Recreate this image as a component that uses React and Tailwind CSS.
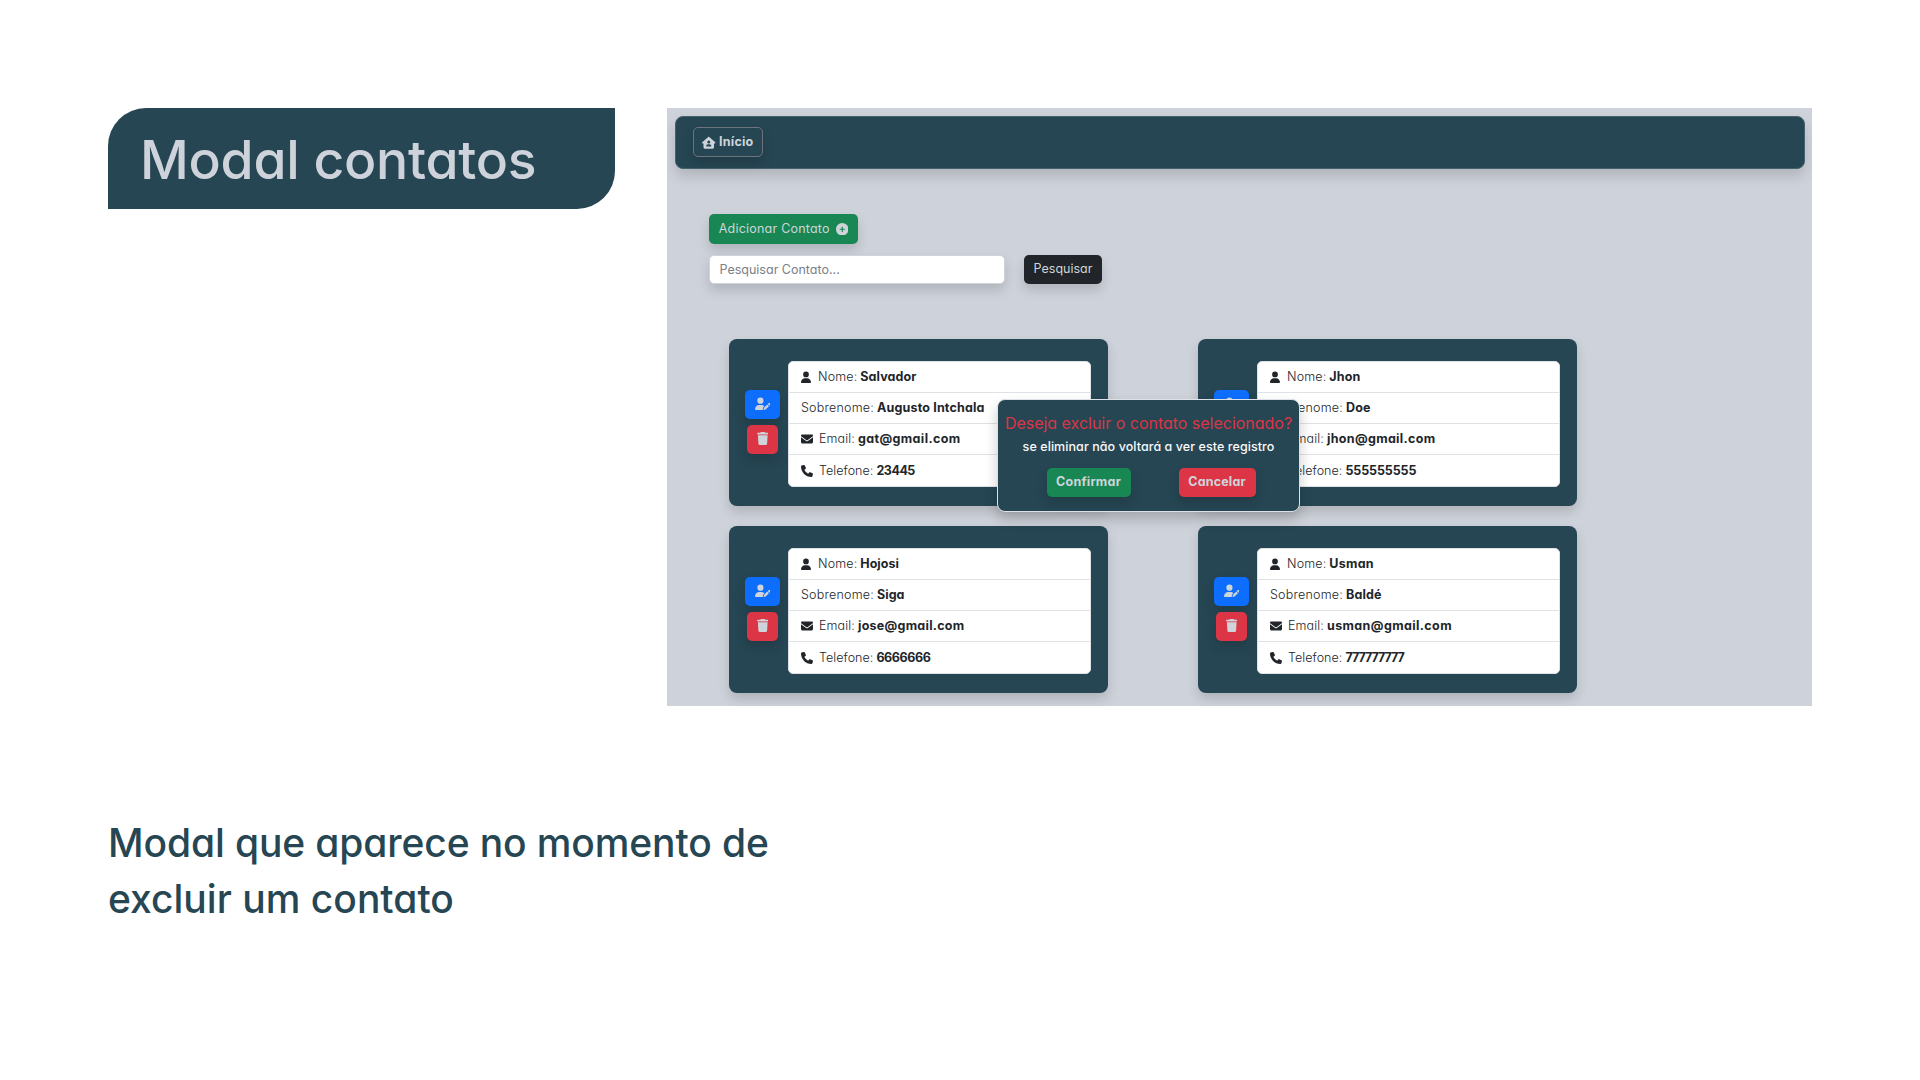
import {
  FaCirclePlus,
  FaEnvelope,
  FaHouseUser,
  FaPhone,
  FaTrash,
  FaUser,
  FaUserPen,
} from "react-icons/fa6";

const contacts = [
  {
    nome: ["Salvador", "tracking-[0.006em]"],
    sobrenome: ["Augusto Intchala", "tracking-[0.013em]"],
    email: ["gat@gmail.com", "tracking-[0.03em]"],
    telefone: ["23445", "tracking-[-0.037em]"],
  },
  {
    nome: ["Jhon", "tracking-[0.009em]"],
    sobrenome: ["Doe", "tracking-[0.01em]"],
    email: ["jhon@gmail.com", "tracking-[0.026em]"],
    telefone: ["555555555", "tracking-[-0.008em]"],
  },
  {
    nome: ["Hojosi", "tracking-normal"],
    sobrenome: ["Siga", "tracking-normal"],
    email: ["jose@gmail.com", "tracking-[0.021em]"],
    telefone: ["6666666", "tracking-[-0.032em]"],
  },
  {
    nome: ["Usman", "tracking-[0.02em]"],
    sobrenome: ["Baldé", "tracking-[0.01em]"],
    email: ["usman@gmail.com", "tracking-[0.031em]"],
    telefone: ["777777777", "tracking-[-0.079em]"],
  },
];

const lift = "shadow-[0_6px_12px_rgba(0,0,0,0.15)]";

function Row({ icon, label, labelClass, value }) {
  return (
    <li className="flex h-[31.1px] items-center pl-[12px] text-[12.5px] leading-none text-[#212529]">
      {icon}
      <span className={`font-light ${labelClass}`}>{label}</span>
      <b className={`ml-[3px] font-bold ${value[1]}`}>{value[0]}</b>
    </li>
  );
}

function ContactCard({ contact }) {
  return (
    <article className={`flex h-[166.5px] w-[379px] rounded-lg bg-[#264653] pl-[16px] pt-[22px] ${lift}`}>
      <div className="flex w-[35px] flex-col items-center gap-[6px] pt-[28.5px] text-[#ced4da]">
        <button className={`flex h-[29.5px] w-[35px] items-center justify-center rounded-[5px] bg-[#0d6efd] ${lift}`}>
          <FaUserPen className="mb-[1px] size-[15.5px]" />
        </button>
        <button className={`flex h-[28.5px] w-[31px] items-center justify-center rounded-[5px] bg-[#dc3545] ${lift}`}>
          <FaTrash className="mb-[1px] h-[13px] w-[11.5px]" />
        </button>
      </div>
      <ul className="ml-[8px] h-[125.5px] w-[303px] divide-y divide-[#dee2e6] overflow-hidden rounded-[5px] border border-[#dee2e6] bg-white">
        <Row
          icon={<FaUser className="mr-[7px] h-[12.5px] w-[10px]" />}
          label="Nome:"
          labelClass="tracking-[0.012em]"
          value={contact.nome}
        />
        <Row label="Sobrenome:" labelClass="tracking-[0.018em]" value={contact.sobrenome} />
        <Row
          icon={<FaEnvelope className="mr-[6px] size-[12px]" />}
          label="Email:"
          labelClass="tracking-[0.01em]"
          value={contact.email}
        />
        <Row
          icon={<FaPhone className="mr-[6px] size-[12px]" />}
          label="Telefone:"
          labelClass="tracking-[0.004em]"
          value={contact.telefone}
        />
      </ul>
    </article>
  );
}

function ConfirmModal() {
  return (
    <div
      role="dialog"
      className="absolute left-[330px] top-[291px] flex h-[113px] w-[303px] flex-col items-center rounded-lg border border-[#dee2e6] bg-[#264653] shadow-[0_7px_13px_rgba(0,0,0,0.2)]"
    >
      <h2 className="mt-[14px] whitespace-nowrap text-[16px] leading-[19px] tracking-[-0.001em] text-[#dc3545]">
        Deseja excluir o contato selecionado?
      </h2>
      <p className="mt-[6px] whitespace-nowrap text-[12.5px] font-medium leading-[15px] tracking-[0.006em] text-[#f8f9fa]">
        se eliminar não voltará a ver este registro
      </p>
      <div className="ml-[5px] mt-[14px] flex gap-[48px] text-[12.5px] font-bold text-[#ced4da]">
        <button className={`h-[29px] w-[84px] rounded-[5px] bg-[#198754] leading-none tracking-[0.02em] ${lift}`}>
          Confirmar
        </button>
        <button className={`h-[29px] w-[77px] rounded-[5px] bg-[#dc3545] leading-none tracking-[0.014em] ${lift}`}>
          Cancelar
        </button>
      </div>
    </div>
  );
}

function ContactsScreen() {
  return (
    <section className="relative h-[598px] w-[1145px] overflow-hidden bg-[#ced2da] pl-[7.5px] pt-[7.5px]">
      <nav className="flex h-[53.5px] w-[1130px] items-center rounded-lg border border-[#45626d] bg-[#264653] pl-[17.5px] shadow-[0_7px_13px_rgba(0,0,0,0.15)]">
        <button className={`flex h-[30px] w-[70px] items-center justify-center gap-[3px] rounded-[5px] border border-[#6c757d] text-[12.5px] font-bold leading-none tracking-[0.019em] text-[#ced4da] ${lift}`}>
          <FaHouseUser className="size-[13.5px]" />
          Início
        </button>
      </nav>

      <div className="ml-[34.5px] mt-[45px] flex flex-col items-start gap-[11px]">
        <button className={`flex h-[30px] w-[149px] items-center justify-center gap-[6px] rounded-[5px] bg-[#198754] text-[12.5px] leading-none tracking-[0.017em] text-[#ced4da] ${lift}`}>
          Adicionar Contato
          <FaCirclePlus className="size-[12.5px]" />
        </button>
        <form className="flex gap-[19px]">
          <input
            placeholder="Pesquisar Contato..."
            className={`h-[29px] w-[296px] rounded-[5px] border border-[#ced4da] bg-white pl-[9.5px] text-[12.5px] placeholder:text-[#7a8087] ${lift}`}
          />
          <button type="button" className={`h-[29px] w-[78px] rounded-[5px] bg-[#212529] text-[12.5px] leading-none text-[#ced4da] ${lift}`}>
            Pesquisar
          </button>
        </form>
      </div>

      <div className="ml-[54.5px] mt-[55px] grid w-[848px] grid-cols-2 gap-x-[90px] gap-y-[20.5px]">
        {contacts.map((contact) => (
          <ContactCard key={contact.nome[0]} contact={contact} />
        ))}
      </div>

      <ConfirmModal />
    </section>
  );
}

export default function App() {
  return (
    <main className="h-[1080px] w-[1920px] overflow-hidden bg-white px-[108px] pt-[108px] font-['Inter',sans-serif] [font-feature-settings:'cv11']">
      <div className="flex items-start justify-between">
        <h1 className="flex h-[101px] w-[507px] items-center rounded-br-[38px] rounded-tl-[38px] bg-[#264653] pl-[32px] pt-[2px] text-[53.5px] font-[450] leading-none tracking-[-0.005em] text-[#ced2da]">
          Modal contatos
        </h1>
        <ContactsScreen />
      </div>
      <p className="mt-[109px] w-[720px] text-[39px] font-medium leading-[56px] text-[#264653]">
        <span className="tracking-[-0.003em]">Modal que aparece no momento de</span>
        <br />
        <span className="tracking-[0.0005em]">excluir um contato</span>
      </p>
    </main>
  );
}
